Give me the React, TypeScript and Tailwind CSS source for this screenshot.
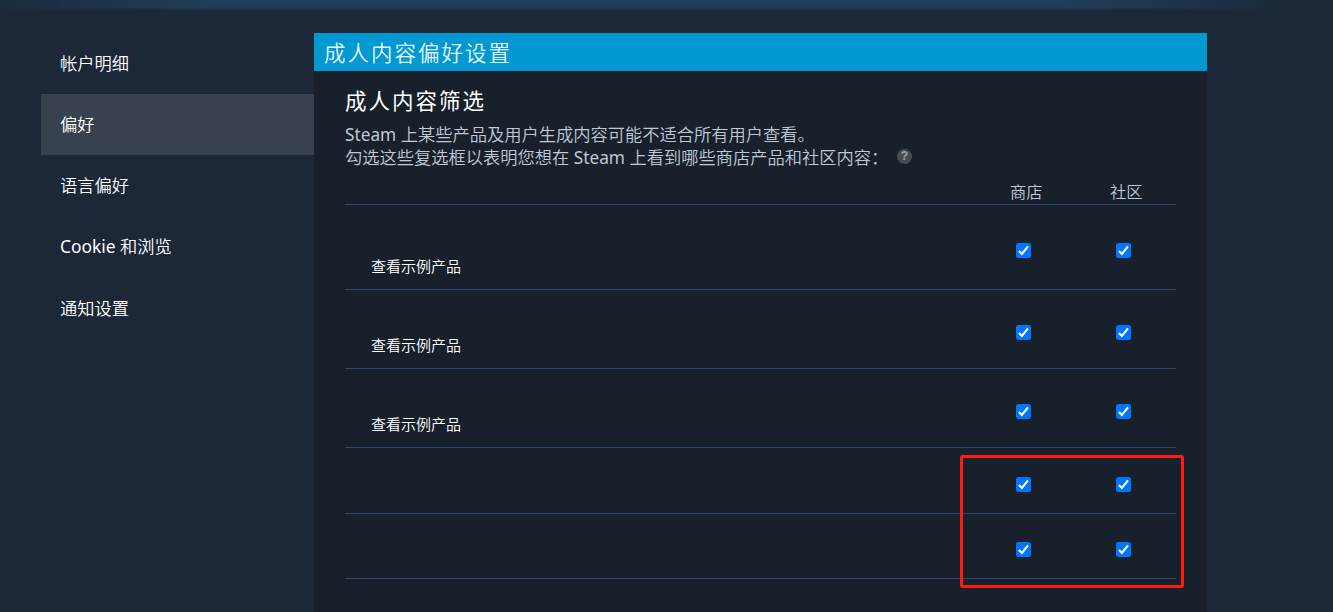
const navItems = [
  { text: '帐户明细' },
  { text: '偏好' },
  { text: '语言偏好' },
  { latin: 'Cookie', text: ' 和浏览' },
  { text: '通知设置' },
];

const rows = [
  { label: '查看示例产品', size: 'h-[85px]', check: 'pt-[38px]', text: 'pt-[51px]' },
  { label: '查看示例产品', size: 'h-[79px]', check: 'pt-[35px]', text: 'pt-[45px]' },
  { label: '查看示例产品', size: 'h-[79px]', check: 'pt-[35px]', text: 'pt-[45px]' },
  { label: '', size: 'h-[66px]', check: 'pt-[28.5px]', text: '' },
  { label: '', size: 'h-[65px]', check: 'pt-[28px]', text: '' },
];

function Check({ label }: { label: string }) {
  return (
    <label className="grid w-[100px] pl-[24px]">
      <input
        type="checkbox"
        defaultChecked
        aria-label={label}
        className="peer col-start-1 row-start-1 m-0 h-[15px] w-[15px] appearance-none rounded-[2.5px] bg-white checked:bg-[#0075ff]"
      />
      <svg
        viewBox="0 0 15 15"
        className="pointer-events-none invisible col-start-1 row-start-1 h-[15px] w-[15px] peer-checked:visible"
        fill="none"
        stroke="#fff"
        strokeWidth="2.1"
      >
        <path d="M2.9 7.9 5.9 10.9 12 3.4" />
      </svg>
    </label>
  );
}

export default function App() {
  return (
    <div className="relative flex h-[612px] w-[1333px] overflow-hidden bg-[#1c2838] font-['Noto_Sans','Noto_Sans_CJK_SC',sans-serif]">
      <div className="absolute inset-x-0 top-0 h-[11px] bg-[linear-gradient(to_right,#1c2b3a_0px,#1e3349_90px,#213d59_210px,#213d59_1060px,#1e334b_1190px,#1c2a3a_1270px,#1c2838_1290px)] [mask-image:linear-gradient(to_bottom,#000_7px,transparent_11px)]" />
      <nav className="ml-[41px] mt-[33px] w-[273px] shrink-0">
        {navItems.map((item, i) => (
          <div
            key={item.text}
            className={`flex items-center whitespace-pre pb-[1px] pl-[19px] text-[17.25px] font-[350] leading-none text-white ${i === 1 ? 'h-[61px] bg-[#38424f]' : 'h-[61.4px]'}`}
          >
            {item.latin && <span className="text-[17.4px] font-normal">{item.latin}</span>}
            {item.text}
          </div>
        ))}
      </nav>
      <main className="mt-[33px] w-[893px] shrink-0 bg-[#17202b]">
        <h1 className="flex h-[38px] items-center bg-[#0298d1] pl-[10px] pt-[2px] text-[21.5px] font-[350] leading-none tracking-[2px] text-[#e6f6fc]">
          成人内容偏好设置
        </h1>
        <div className="ml-[31px] w-[831px] pt-[18px]">
          <h2 className="h-[24px] text-[21.5px] leading-[24px] tracking-[2px] text-white">成人内容筛选</h2>
          <p className="mt-[10px] whitespace-nowrap text-[17.25px] font-[350] leading-[23px] text-[#bfcad6]">
            <span className="font-normal">Steam</span> 上某些产品及用户生成内容可能不适合所有用户查看。
          </p>
          <div className="flex h-[23px] items-center whitespace-nowrap text-[17.25px] font-[350] leading-[23px] text-[#bfcad6]">
            <span className="w-[552px]">
              勾选这些复选框以表明您想在 <span className="font-normal">Steam</span> 上看到哪些商店产品和社区内容：
            </span>
            <span className="mb-[3px] flex h-[15px] w-[15px] items-center justify-center rounded-full bg-[#474c54] font-['Liberation_Sans',sans-serif] text-[12px] font-bold leading-none text-[#a2a6aa]">
              ?
            </span>
          </div>
          <div className="flex h-[36px] justify-end border-b border-[#304766] pt-[13px] text-[16.25px] font-[350] leading-[20px] text-[#bfcad6]">
            <div className="w-[100px] pl-[18px]">商店</div>
            <div className="w-[84px] pl-[18px]">社区</div>
          </div>
          {rows.map((row, i) => (
            <div key={i} className={`flex border-b border-[#304766] ${row.size}`}>
              <div className={`w-[647px] shrink-0 pl-[26px] text-[15px] font-[350] leading-[20px] text-white ${row.text}`}>
                {row.label}
              </div>
              <div className={`flex shrink-0 items-start ${row.check}`}>
                <Check label="商店" />
                <Check label="社区" />
              </div>
            </div>
          ))}
        </div>
      </main>
      <div className="absolute left-[960px] top-[455px] h-[133px] w-[224px] rounded-[3px] border-3 border-[#ff1c0f]" />
    </div>
  );
}
